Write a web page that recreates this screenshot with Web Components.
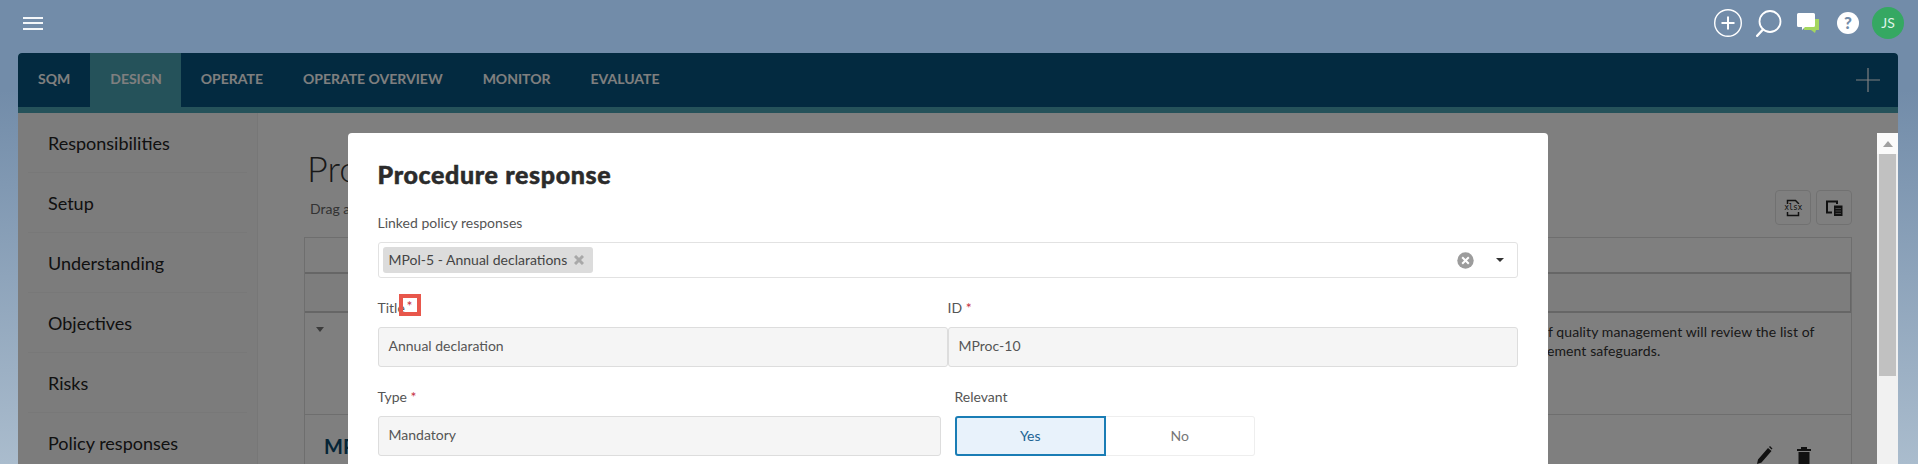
<!DOCTYPE html>
<html>
<head>
<meta charset="utf-8">
<title>Procedure response</title>
<style>
  html, body { margin: 0; height: 464px; overflow: hidden; }
  body {
    font-family: Lato, "Liberation Sans", sans-serif;
    background: linear-gradient(180deg, #728ca9 0, #728ca9 90px, #aabccd 464px);
  }
</style>
</head>
<body>
<app-topbar></app-topbar>
<app-card>
  <main-nav slot="nav"></main-nav>
  <side-nav slot="side"></side-nav>
  <procedure-page slot="main"></procedure-page>
  <modal-layer slot="layer">
    <procedure-form></procedure-form>
  </modal-layer>
</app-card>

<script>
class ShadowEl extends HTMLElement{
  constructor(){
    super()
    this.attachShadow({ mode: 'open' });
    this.shadowRoot.innerHTML = this.template();
  }
  template(){
    return "";
  }
}

class AppTopbar extends ShadowEl{
  template(){
    return `
    <style>
      :host { display: flex; height: 53px; box-sizing: border-box; padding: 0 14px 0 23px; align-items: center; color: #fff; }
      .burger { width: 20px; height: 13px; display: flex; flex-direction: column; justify-content: space-between; margin-top: -7px; }
      .burger i { display: block; height: 2px; background: #f4f7fa; }
      .icons { margin-left: auto; display: flex; align-items: center; margin-top: -7px; }
      svg { display: block; }
      .plus { margin-right: 13px; }
      .search { margin-right: 15px; }
      .chat { margin-right: 18px; }
      .help { width: 22px; height: 22px; border-radius: 50%; background: #fff; color: #728ca9; font: 900 17px/22px Lato, sans-serif; text-align: center; margin-right: 13px; }
      .avatar { width: 32px; height: 32px; border-radius: 50%; background: #35a862; color: #dff3e6; font: 400 14px/32px Lato, sans-serif; text-align: center; }
    </style>
    <div class="burger"><i></i><i></i><i></i></div>
    <div class="icons">
      <svg class="plus" width="30" height="30" viewBox="0 0 30 30" fill="none" stroke="#fff">
        <circle cx="15" cy="15" r="13.3" stroke-width="1.4"/>
        <path d="M15 8.5v13M8.5 15h13" stroke-width="2"/>
      </svg>
      <svg class="search" width="26" height="27" viewBox="0 0 26 27" fill="none" stroke="#fff">
        <circle cx="14" cy="11.5" r="10.5" stroke-width="1.8"/>
        <path d="M7 19.5L1.2 25.8" stroke-width="2.4" stroke-linecap="round"/>
      </svg>
      <svg class="chat" width="22" height="20" viewBox="0 0 22 20">
        <path d="M7 6h15v11h-3l-1 3-4-3H7z" fill="#a4d65e"/>
        <path d="M1.5 0h15A1.5 1.5 0 0 1 18 1.5v11a1.5 1.5 0 0 1-1.5 1.5H8l-3 3v-3H1.500A1.500 1.500 0 0 1 0 12.500v-11A1.500 1.500 0 0 1 1.500 0z" fill="#fff"/>
      </svg>
      <div class="help">?</div>
      <div class="avatar">JS</div>
    </div>
    `
  }
}

class AppCard extends ShadowEl{
  template(){
    return `
    <style>
      :host { display: block; position: relative; margin: 0 20px 0 18px; height: 520px; border-radius: 4px 4px 0 0; overflow: hidden; background: #fff; }
      .body { display: flex; height: 407px; }
      ::slotted([slot=main]) { flex: 1; min-width: 0; }
    </style>
    <slot name="nav"></slot>
    <div class="body">
      <slot name="side"></slot>
      <slot name="main"></slot>
    </div>
    <slot name="layer"></slot>
    `
  }
}

class MainNav extends ShadowEl{
  template(){
    let tabs = ["SQM", "DESIGN", "OPERATE", "OPERATE OVERVIEW", "MONITOR", "EVALUATE"];
    return `
    <style>
      :host { display: flex; height: 54px; background: #065480; border-bottom: 6px solid #4aa4b4; color: #fff; font: 700 14px/52px Lato, sans-serif; }
      a { padding: 0 20px; }
      a.on { background: #4aa4b4; padding-right: 19px; }
      svg { margin: 15px 18px 0 auto; }
    </style>
    ${tabs.map(t => `<a class="${t == "DESIGN" ? "on" : ""}">${t}</a>`).join("")}
    <svg width="24" height="24" viewBox="0 0 24 24" stroke="#fff" stroke-width="1.2"><path d="M12 0v24M0 12h24"/></svg>
    `
  }
}

class SideNav extends ShadowEl{
  template(){
    let items = ["Responsibilities", "Setup", "Understanding", "Objectives", "Risks", "Policy responses"];
    return `
    <style>
      :host { display: block; width: 240px; box-sizing: border-box; padding: 0 10px; background: #f8f8f8; border-right: 1px solid #eee; color: #222; font: 400 18px Lato, sans-serif; }
      div { height: 60px; line-height: 61px; padding-left: 20px; border-bottom: 1px solid #f0f0f0; box-sizing: border-box; }
    </style>
    ${items.map(t => `<div>${t}</div>`).join("")}
    `
  }
}

class ProcedurePage extends ShadowEl{
  template(){
    return `
    <style>
      :host { display: block; box-sizing: border-box; padding: 0 46px 0 46px; background: #fff; font: 400 14px Lato, sans-serif; color: #333; }
      .head { display: flex; height: 124px; }
      .head-text { padding-top: 30px; }
      h1 { margin: 0 0 0 3px; font: 300 36px/50px Lato, sans-serif; color: #333; }
      p { margin: 6px 0 0 6px; line-height: 20px; color: #666; }
      .tools { margin-left: auto; padding-top: 77px; display: flex; gap: 5px; }
      .tool { width: 36px; height: 35px; box-sizing: border-box; border: 1px solid #e2e2e2; border-radius: 4px; display: flex; align-items: center; justify-content: center; position: relative; }
      .tool span { font: 400 8px/10px "DejaVu Sans Mono", monospace; color: #222; letter-spacing: -0.4px; position: absolute; top: 12px; left: 0; right: 0; text-align: center; }
      .table { border: 1px solid #ddd; border-bottom: 0; }
      .r1 { height: 34px; }
      .r2 { height: 37px; border-top: 2px solid #ccc; border-bottom: 2px solid #ccc; border-right: 1px solid #ccc; background: #fbfbfb; }
      .r3 { height: 102px; position: relative; border-bottom: 1px solid #ddd; box-sizing: border-box; }
      .caret { position: absolute; left: 11px; top: 14px; width: 0; height: 0; border: 4px solid transparent; border-top: 5px solid #777; }
      .lines { position: absolute; top: 9px; left: 1235px; line-height: 19px; white-space: nowrap; color: #333; letter-spacing: 0.1px; }
      .lines div + div { margin-left: -34px; }
      .r4 { position: relative; height: 60px; }
      .r4 b { position: absolute; left: 19px; top: 19px; font: 700 20px/24px Lato, sans-serif; color: #0a4a6e; }
      .pen { position: absolute; left: 1452px; top: 31px; }
      .bin { position: absolute; left: 1491px; top: 31px; }
    </style>
    <div class="head">
      <div class="head-text">
        <h1>Pro</h1>
        <p>Drag a</p>
      </div>
      <div class="tools">
        <div class="tool">
          <svg width="16" height="18" viewBox="0 0 16 18" fill="none" stroke="#222" stroke-width="1.5"><path d="M2.500 5V1.500h8L13.500 4.500V5M2.500 13v3.500h11V13"/></svg>
          <span>xlsx</span>
        </div>
        <div class="tool">
          <svg width="18" height="18" viewBox="0 0 18 18"><path d="M1 1.500h12V5h-2V3.500H3v9h4v2H1z" fill="#222"/><path d="M9 6.500h8.500V17H9z" fill="#222"/><path d="M10.500 9.500h5.500M10.500 12h5.500M10.500 14.500h5.500" stroke="#888" stroke-width="1"/></svg>
        </div>
      </div>
    </div>
    <div class="table">
      <div class="r1"></div>
      <div class="r2"></div>
      <div class="r3">
        <i class="caret"></i>
        <div class="lines">
          <div>of quality management will review the list of</div>
          <div>management safeguards.</div>
        </div>
      </div>
      <div class="r4">
        <b>MP</b>
        <svg class="pen" width="16" height="18" viewBox="0 0 16 18" fill="#222"><path d="M0 18l1-4.500L11 2l3.500 3L4.500 16.500zM12 1l1-1 2.500 2.500-1 1z"/></svg>
        <svg class="bin" width="16" height="18" viewBox="0 0 16 18" fill="#222"><path d="M1 3h14v2H1zM5 1h6v2H5zM2.500 6h11v12h-11z"/></svg>
      </div>
    </div>
    `
  }
}

class ModalLayer extends ShadowEl{
  template(){
    return `
    <style>
      :host { display: flex; position: absolute; inset: 0; background: rgba(0,0,0,.5); box-sizing: border-box; padding-top: 80px; }
      .center { flex: 1; display: flex; justify-content: center; min-width: 0; }
      .scroll { width: 21px; box-sizing: border-box; padding: 0 2px; background: #f1f1f1; display: flex; flex-direction: column; }
      .btn { height: 21px; margin: 0 -2px; background: #fafafa; display: flex; align-items: center; justify-content: center; }
      .btn i { width: 0; height: 0; border: 5px solid transparent; border-top: 0; border-bottom: 6px solid #a0a0a0; }
      .thumb { height: 222px; background: #c1c1c1; }
    </style>
    <div class="center"><slot></slot></div>
    <div class="scroll"><div class="btn"><i></i></div><div class="thumb"></div></div>
    `
  }
}

class ReqMark extends ShadowEl{
  template(){
    return `
    <style>
      :host { display: inline-block; color: #c62f3f; font: 400 14px/20px Lato, sans-serif; }
      :host([boxed]) { position: absolute; left: 21px; top: -4px; width: 22px; height: 22px; box-sizing: border-box; border: 4px solid #e8574c; text-align: center; line-height: 15px; }
    </style>
    *
    `
  }
}

class FormField extends ShadowEl{
  template(){
    return `
    <style>
      :host { display: block; position: relative; min-width: 0; }
      label { display: block; position: relative; height: 20px; line-height: 20px; margin-bottom: 9px; color: #555; font-size: 14px; }
      .box { box-sizing: border-box; height: 40px; line-height: 35px; padding: 0 10px; border: 1px solid #ddd; border-radius: 3px; background: #f5f5f5; color: #555; font-size: 14px; }
    </style>
    <label><slot name="label"></slot></label>
    <slot name="control"><div class="box"><slot></slot></div></slot>
    `
  }
}

class TagSelect extends ShadowEl{
  template(){
    return `
    <style>
      :host { display: flex; align-items: center; box-sizing: border-box; height: 36px; border: 1px solid #e2e2e2; border-radius: 3px; padding: 0 13px 0 4px; color: #444; font-size: 14px; }
      .tag { display: flex; align-items: center; height: 26px; width: 210px; box-sizing: border-box; padding: 0 6px 0 6px; background: #dcdcdc; border-radius: 3px; }
      .tag span { padding-bottom: 1px; }
      .tag svg { margin-left: auto; margin-right: 3px; }
      .clear { margin-left: auto; margin-right: 22px; }
      .caret { width: 0; height: 0; border: 4px solid transparent; border-top: 4.500px solid #333; border-bottom: 0; }
    </style>
    <div class="tag"><span>MPol-5 - Annual declarations</span>
      <svg width="10" height="10" viewBox="0 0 10 10" stroke="#a8a8a8" stroke-width="3"><path d="M1 1l8 8M9 1l-8 8"/></svg>
    </div>
    <svg class="clear" width="17" height="17" viewBox="0 0 17 17"><circle cx="8.500" cy="8.500" r="8.200" fill="#9c9c9c"/><path d="M5.200 5.200l6.600 6.600M11.800 5.200l-6.600 6.600" stroke="#fff" stroke-width="2"/></svg>
    <i class="caret"></i>
    `
  }
}

class YesNo extends ShadowEl{
  template(){
    return `
    <style>
      :host { display: flex; height: 40px; font-size: 14px; }
      div { flex: 1; box-sizing: border-box; text-align: center; line-height: 38px; }
      .yes { background: #e8f2fb; border: 2px solid #1a7db5; border-radius: 3px 0 0 3px; color: #1b6394; line-height: 36px; }
      .no { border: 1px solid #eee; border-left: 0; border-radius: 0 3px 3px 0; color: #777; }
    </style>
    <div class="yes">Yes</div><div class="no">No</div>
    `
  }
}

class ProcedureForm extends ShadowEl{
  template(){
    return `
    <style>
      :host { display: block; width: 1200px; height: 420px; box-sizing: border-box; padding: 0 30px; background: #fff; border-radius: 4px 4px 0 0; color: #333; font: 400 14px Lato, sans-serif; }
      h2 { margin: 0; padding: 25px 0 0; height: 80px; box-sizing: border-box; font: 900 25px/32px "Lato Black", Lato, sans-serif; color: #2b2b2b; -webkit-text-stroke: 0.5px #2b2b2b; letter-spacing: 0.65px; }
      .first { margin-bottom: 20px; }
      .row { display: grid; grid-template-columns: 1fr 1fr; margin-bottom: 20px; }
      .type { grid-template-columns: 563px 300px; column-gap: 14px; }
    </style>
    <h2>Procedure response</h2>
    <form-field class="first">
      <span slot="label">Linked policy responses</span>
      <tag-select slot="control"></tag-select>
    </form-field>
    <div class="row">
      <form-field><span slot="label">Title<req-mark boxed></req-mark></span>Annual declaration</form-field>
      <form-field><span slot="label">ID <req-mark></req-mark></span>MProc-10</form-field>
    </div>
    <div class="row type">
      <form-field><span slot="label">Type <req-mark></req-mark></span>Mandatory</form-field>
      <form-field><span slot="label">Relevant</span><yes-no slot="control"></yes-no></form-field>
    </div>
    `
  }
}

customElements.define('app-topbar', AppTopbar);
customElements.define('app-card', AppCard);
customElements.define('main-nav', MainNav);
customElements.define('side-nav', SideNav);
customElements.define('procedure-page', ProcedurePage);
customElements.define('modal-layer', ModalLayer);
customElements.define('req-mark', ReqMark);
customElements.define('form-field', FormField);
customElements.define('tag-select', TagSelect);
customElements.define('yes-no', YesNo);
customElements.define('procedure-form', ProcedureForm);
</script>
</body>
</html>
